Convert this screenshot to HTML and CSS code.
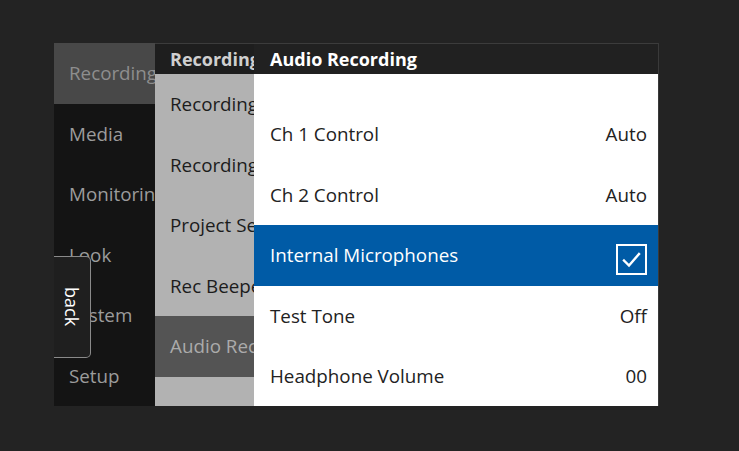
FILE: index.html
```html
<!DOCTYPE html>
<html>
<head>
<meta charset="utf-8">
<link rel="stylesheet" href="styles.css">
</head>
<body>
<div class="stage">
  <div class="menu">
    <div class="col col-main">
      <div class="row active">Recording</div>
      <div class="row">Media</div>
      <div class="row">Monitoring</div>
      <div class="row">Look</div>
      <div class="row">System</div>
      <div class="row">Setup</div>
    </div>
    <div class="col col-sub">
      <div class="head">Recording</div>
      <div class="row">Recording</div>
      <div class="row">Recording</div>
      <div class="row">Project Settings</div>
      <div class="row">Rec Beeper</div>
      <div class="row active">Audio Recording</div>
    </div>
    <div class="col col-detail">
      <div class="head">Audio Recording</div>
      <div class="spacer"></div>
      <div class="row"><span>Ch 1 Control</span><span>Auto</span></div>
      <div class="row"><span>Ch 2 Control</span><span>Auto</span></div>
      <div class="row selected"><span>Internal Microphones</span>
        <span class="check"><svg width="27" height="27" viewBox="0 0 27 27"><path d="M6 14.5 L11 19.5 L21 8" fill="none" stroke="#fff" stroke-width="2.4" stroke-linecap="square"/></svg></span>
      </div>
      <div class="row"><span>Test Tone</span><span>Off</span></div>
      <div class="row"><span>Headphone Volume</span><span>00</span></div>
    </div>
    <div class="back"><span>back</span></div>
  </div>
</div>
</body>
</html>
```
FILE: styles.css
```css
html, body {
  margin: 0;
  padding: 0;
  background: #232323;
}
body {
  width: 739px;
  height: 451px;
  overflow: hidden;
  font-family: "Open Sans", "Noto Sans", sans-serif;
  font-size: 18.8px;
  font-weight: 500;
}
.stage {
  padding: 43px 0 0 54px;
}
.menu {
  position: relative;
  display: flex;
  width: 605px;
  height: 363px;
}
.col {
  display: flex;
  flex-direction: column;
  overflow: hidden;
  white-space: nowrap;
}
.row {
  height: 60.5px;
  flex: none;
  display: flex;
  align-items: center;
  padding-left: 15px;
  box-sizing: border-box;
}
.col-main {
  width: 101px;
  background: #141414;
  color: #9c9c9c;
}
.col-main .active {
  background: #484848;
  color: #8e8e8e;
}
.col-sub {
  width: 99px;
  background: #b2b2b2;
  color: #1c1c1c;
}
.head {
  height: 31px;
  flex: none;
  display: flex;
  align-items: center;
  font-weight: bold;
  font-size: 18px;
  background: #1e1e1e;
  box-sizing: border-box;
  border-top: 1px solid #3c3c3c;
}
.col-sub .head {
  padding-left: 15px;
  color: #cfcfcf;
}
.col-sub .active {
  background: #545454;
  color: #ababab;
}
.col-detail {
  width: 405px;
  background: #fff;
  color: #222;
  box-sizing: border-box;
  border-right: 1px solid #3a3a3a;
}
.col-detail .head {
  padding-left: 16px;
  color: #fff;
  background: #212121;
}
.spacer {
  height: 30px;
  flex: none;
}
.col-detail .row {
  padding: 0 11px 0 16px;
  justify-content: space-between;
}
.col-detail .selected {
  background: #005ba6;
  color: #fff;
}
.check {
  width: 31px;
  height: 31px;
  box-sizing: border-box;
  border: 2px solid #fff;
  display: flex;
  align-items: center;
  justify-content: center;
  margin-top: 8px;
}
.back {
  position: absolute;
  left: 0;
  top: 213px;
  width: 37px;
  height: 102px;
  box-sizing: border-box;
  background: #1f1f1f;
  border: 1px solid #8a8a8a;
  border-left: none;
  border-radius: 0 5px 5px 0;
  display: flex;
  align-items: center;
  justify-content: center;
  color: #fff;
}
.back span {
  writing-mode: vertical-rl;
  font-size: 18px;
  font-weight: 400;
}
```
